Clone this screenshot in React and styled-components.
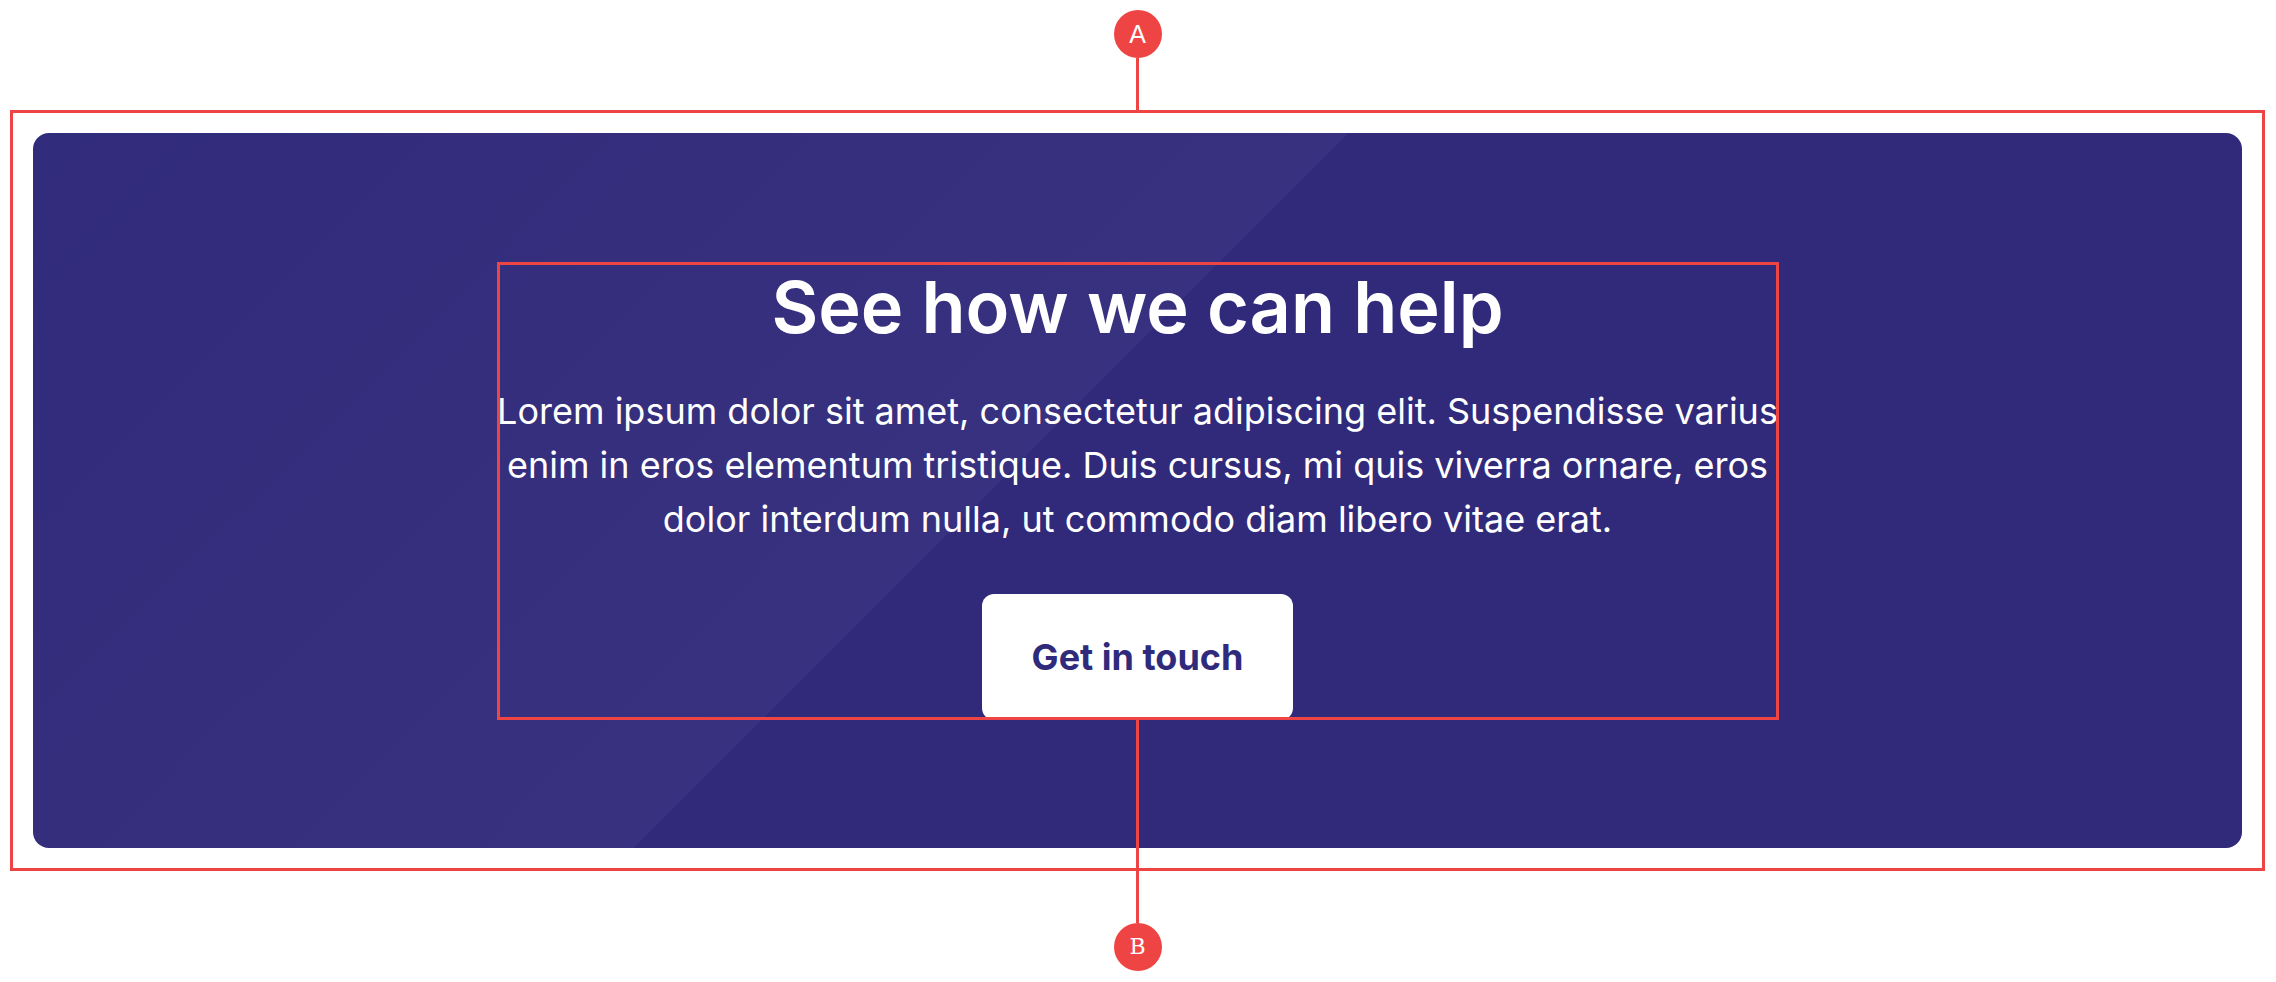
import React from "react";
import styled, { createGlobalStyle } from "styled-components";

const GlobalStyle = createGlobalStyle`
  html, body {
    margin: 0;
    padding: 0;
    background: #ffffff;
  }
  body {
    font-family: Inter, "Liberation Sans", sans-serif;
  }
  * { box-sizing: border-box; }
`;

const ANNOT = "#ef4444";

const Page = styled.div`
  display: flex;
  flex-direction: column;
  align-items: center;
  padding: 10px 11px 0 10px;
  width: 2276px;
  min-height: 982px;
`;

const Marker = styled.div`
  width: 48px;
  height: 48px;
  border-radius: 50%;
  background: ${ANNOT};
  color: #ffffff;
  display: flex;
  align-items: center;
  justify-content: center;
  font-family: ${(p) =>
    p.$serif ? `"DejaVu Serif", "Liberation Serif", serif` : `"Liberation Sans", Arial, sans-serif`};
  font-size: ${(p) => (p.$serif ? "22px" : "25px")};
  line-height: 1;
  flex-shrink: 0;
`;

const Connector = styled.div`
  width: 3px;
  height: ${(p) => p.$h}px;
  background: ${ANNOT};
  flex-shrink: 0;
`;

const Frame = styled.div`
  align-self: stretch;
  border: 3px solid ${ANNOT};
  padding: 20px;
`;

const Card = styled.section`
  border-radius: 16px;
  padding: 129px 0 128px;
  background: linear-gradient(
    135deg,
    #312b7b 0%,
    #37317f 45%,
    #312a7b 45%,
    #312a7b 100%
  );
  display: flex;
  justify-content: center;
`;

const Content = styled.div`
  position: relative;
  width: 1282px;
  display: flex;
  flex-direction: column;
  align-items: center;
  text-align: center;

  &::after {
    content: "";
    position: absolute;
    inset: 0;
    border: 3px solid ${ANNOT};
    pointer-events: none;
  }
`;

const Heading = styled.h2`
  margin: 0 0 32px;
  font-family: Inter, "Liberation Sans", sans-serif;
  font-size: 72px;
  font-weight: 600;
  line-height: 1.25;
  color: #ffffff;
`;

const Body = styled.p`
  margin: 0 0 48px;
  font-family: Inter, "Liberation Sans", sans-serif;
  font-size: 36px;
  font-weight: 400;
  line-height: 1.5;
  color: #ffffff;
`;

const Button = styled.button`
  border: none;
  border-radius: 12px;
  background: #ffffff;
  color: #2f2a7c;
  font-family: Inter, "Liberation Sans", sans-serif;
  font-size: 36px;
  font-weight: 700;
  line-height: 1.5;
  padding: 36px 50px;
  cursor: pointer;
`;

const BottomAnnot = styled.div`
  position: absolute;
  top: calc(100% - 3px);
  left: 50%;
  transform: translateX(-50%);
  display: flex;
  flex-direction: column;
  align-items: center;
  pointer-events: none;
`;

export default function App() {
  return (
    <>
      <GlobalStyle />
      <Page>
        <Marker>A</Marker>
        <Connector $h={52} />
        <Frame>
          <Card>
            <Content>
              <Heading>See how we can help</Heading>
              <Body>
                Lorem ipsum dolor sit amet, consectetur adipiscing elit. Suspendisse varius
                enim in eros elementum tristique. Duis cursus, mi quis viverra ornare, eros
                dolor interdum nulla, ut commodo diam libero vitae erat.
              </Body>
              <Button>Get in touch</Button>
              <BottomAnnot>
                <Connector $h={206} />
                <Marker $serif>B</Marker>
              </BottomAnnot>
            </Content>
          </Card>
        </Frame>
      </Page>
    </>
  );
}
